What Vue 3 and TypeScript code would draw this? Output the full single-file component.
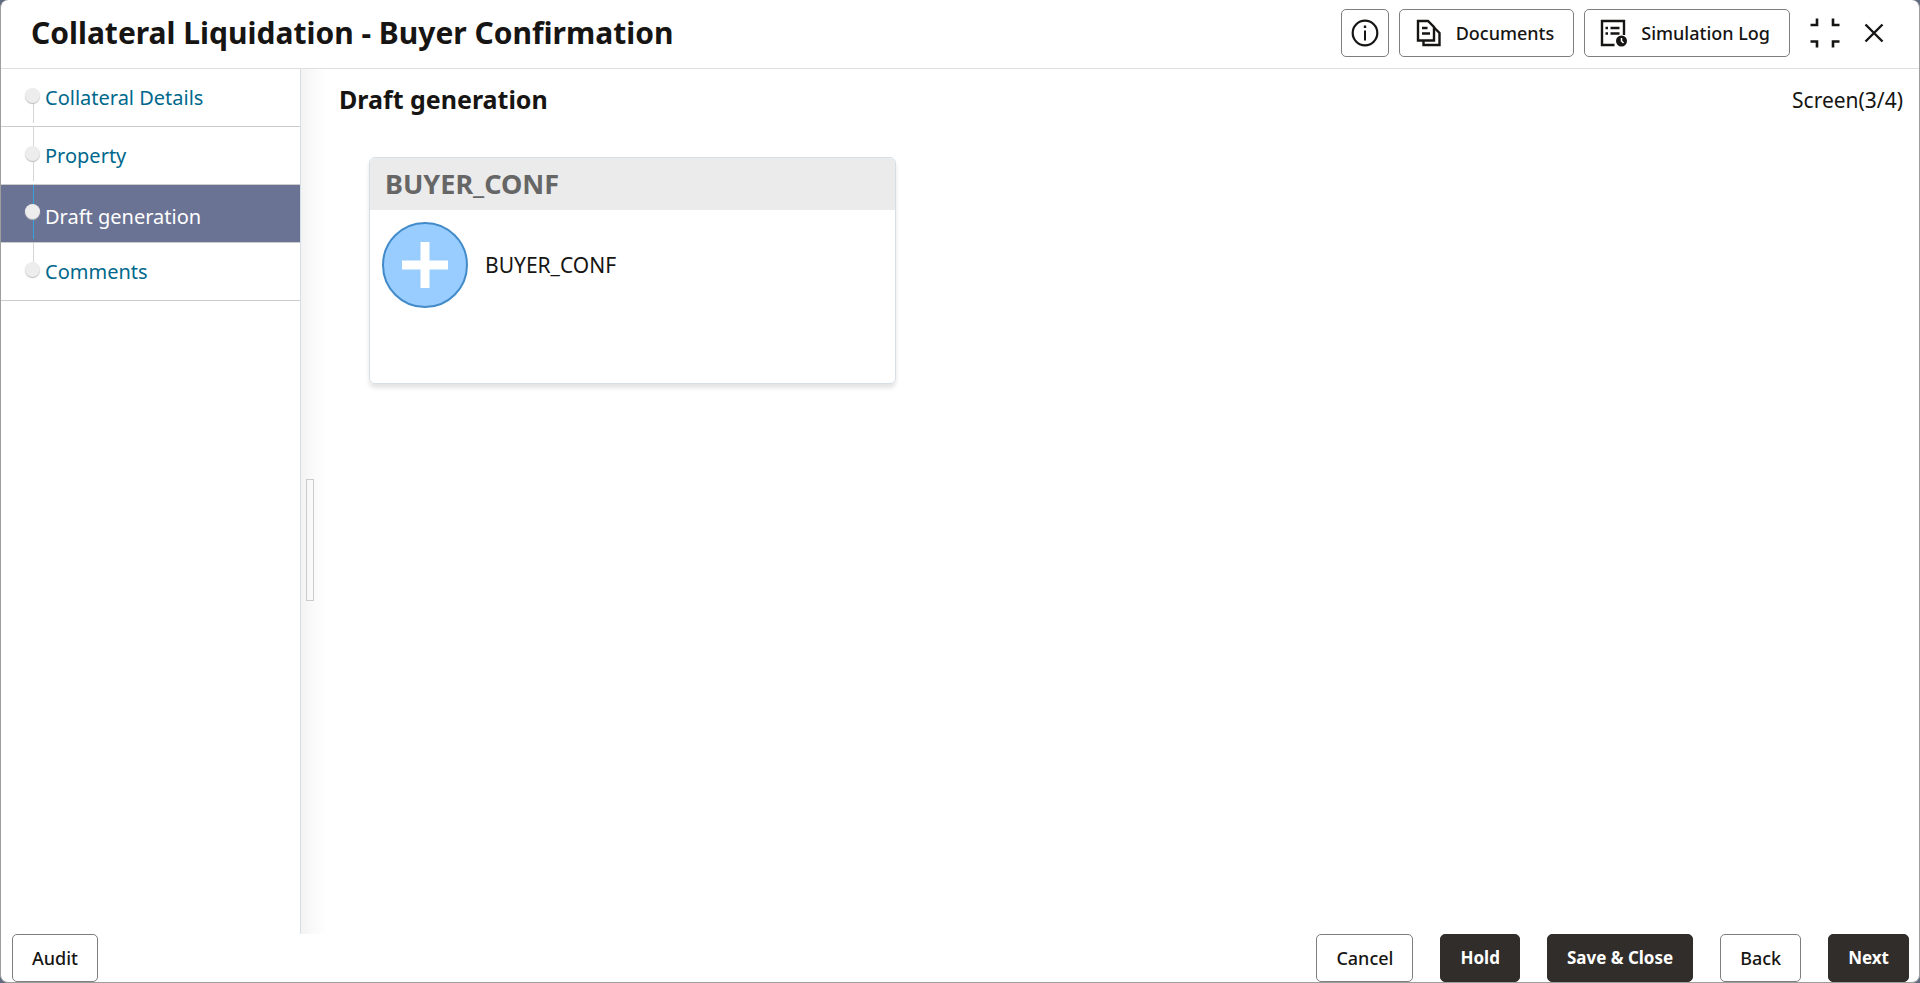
<script setup lang="ts">
import { ref } from 'vue'

interface Step {
  id: string
  label: string
}

interface FooterAction {
  label: string
  primary: boolean
}

const steps: Step[] = [
  { id: 'collateral', label: 'Collateral Details' },
  { id: 'property', label: 'Property' },
  { id: 'draft', label: 'Draft generation' },
  { id: 'comments', label: 'Comments' },
]

const actions: FooterAction[] = [
  { label: 'Cancel', primary: false },
  { label: 'Hold', primary: true },
  { label: 'Save & Close', primary: true },
  { label: 'Back', primary: false },
  { label: 'Next', primary: true },
]

const activeStep = ref('draft')
</script>

<template>
  <div class="window">
    <header class="header">
      <h1 class="title">Collateral Liquidation - Buyer Confirmation</h1>
      <div class="tools">
        <button class="btn square" type="button" aria-label="Information">
          <svg width="28" height="28" viewBox="0 0 28 28" fill="none" stroke="#161513">
            <circle cx="14" cy="14" r="12.3" stroke-width="2.2" />
            <path d="M14 11.5V21.5" stroke-width="2" />
            <path d="M14 6.5V9" stroke-width="2.4" />
          </svg>
        </button>
        <button class="btn tool" type="button">
          <svg width="28" height="28" viewBox="0 0 28 28" fill="none" stroke="#161513" stroke-width="2.4">
            <path d="M4 2H14L20 8V21.500H4Z" />
            <path d="M20 8.500L25.500 14V26H9.500V21.500" />
            <path d="M8 9H13.500M8 14.500H16" />
          </svg>
          <span>Documents</span>
        </button>
        <button class="btn tool" type="button">
          <svg width="28" height="28" viewBox="0 0 28 28" fill="none" stroke="#161513" stroke-width="2.4">
            <path d="M15.500 26H3V2H25V16" />
            <path d="M6.500 9H9M11.500 9H20.500M6.500 14.500H9M11.500 14.500H20.500" />
            <circle cx="22.500" cy="22" r="5.500" fill="#161513" stroke="none" />
            <path d="M22.500 19V22L24.500 24" stroke="#fff" stroke-width="1.500" />
          </svg>
          <span>Simulation Log</span>
        </button>
        <button class="icon-btn" type="button" aria-label="Restore">
          <svg width="30" height="30" viewBox="0 0 30 30" fill="none" stroke="#161513" stroke-width="2.600">
            <path d="M.5 7H7V.5M23 .5V7H29.500M.5 23.500H7V29.500M23 29.500V23.500H29.500" />
          </svg>
        </button>
        <button class="icon-btn" type="button" aria-label="Close">
          <svg width="20" height="20" viewBox="0 0 20 20" fill="none" stroke="#161513" stroke-width="2.400">
            <path d="M1.500 1.500L18.500 18.500M18.500 1.500L1.500 18.500" />
          </svg>
        </button>
      </div>
    </header>

    <div class="body">
      <nav class="steps" aria-label="Steps">
        <a
          v-for="step in steps"
          :key="step.id"
          href="#"
          class="step"
          :class="{ active: step.id === activeStep }"
          @click.prevent="activeStep = step.id"
        >
          <span class="track"><span class="dot"></span></span>
          <span class="step-label">{{ step.label }}</span>
        </a>
      </nav>
      <div class="splitter"><span class="handle"></span></div>
      <main class="main">
        <div class="main-head">
          <h2 class="subtitle">Draft generation</h2>
          <span class="counter">Screen(3/4)</span>
        </div>
        <section class="card">
          <h3 class="card-title">BUYER_CONF</h3>
          <div class="card-body">
            <button class="add" type="button" aria-label="Add BUYER_CONF">
              <svg width="86" height="86" viewBox="0 0 86 86">
                <circle cx="43" cy="43" r="42" fill="#99ccff" stroke="#428bca" stroke-width="2" />
                <path d="M20 43H66M43 20V66" stroke="#fff" stroke-width="9" />
              </svg>
            </button>
            <span class="doc-name">BUYER_CONF</span>
          </div>
        </section>
      </main>
    </div>

    <footer class="footer">
      <button class="btn" type="button">Audit</button>
      <div class="actions">
        <button
          v-for="action in actions"
          :key="action.label"
          class="btn"
          :class="{ primary: action.primary }"
          type="button"
        >
          {{ action.label }}
        </button>
      </div>
    </footer>
  </div>
</template>

<style>
body {
  margin: 0;
  background: #5d6a80;
}
</style>

<style scoped>
.window {
  box-sizing: border-box;
  min-height: 100vh;
  display: flex;
  flex-direction: column;
  border: 1px solid #9e9e9e;
  border-top: 0;
  border-radius: 8px;
  background: #fff;
  color: #161513;
  font-family: "Noto Sans", "Open Sans", sans-serif;
  font-size: 20px;
}

h1,
h2,
h3 {
  margin: 0;
}

svg {
  display: block;
  flex: none;
}

.header {
  display: flex;
  align-items: center;
  justify-content: space-between;
  min-height: 66px;
  padding: 0 35px 2px 30px;
  border-bottom: 1px solid #dfdfdf;
}

.title {
  font-size: 30px;
  line-height: 40px;
  font-weight: 700;
}

.tools {
  display: flex;
  align-items: center;
}

.btn {
  box-sizing: border-box;
  display: flex;
  align-items: center;
  justify-content: center;
  height: 48px;
  padding: 0 19px;
  border: 1px solid #7f7e7d;
  border-radius: 5px;
  background: #fff;
  color: #161513;
  font: 500 18px/24px "Noto Sans", "Open Sans", sans-serif;
  white-space: nowrap;
}

.btn.square {
  width: 48px;
  padding: 0;
}

.btn.tool {
  gap: 14px;
  margin-left: 10px;
  padding: 0 19px 0 14px;
}

.btn.primary {
  border-color: #312d2a;
  background: #312d2a;
  color: #fff;
  font-size: 17px;
  font-weight: 700;
}

.icon-btn {
  margin-left: 20px;
  padding: 0;
  border: 0;
  background: none;
}

.icon-btn + .icon-btn {
  margin-left: 24px;
}

.body {
  flex: 1;
  display: flex;
}

.steps {
  box-sizing: border-box;
  width: 300px;
  flex: none;
  border-right: 1px solid #d6dfe6;
}

.step {
  box-sizing: border-box;
  display: flex;
  height: 58px;
  padding-left: 24px;
  border-bottom: 1px solid #ccc;
  color: #00688c;
  text-decoration: none;
}

.track {
  display: flex;
  justify-content: center;
  width: 15px;
  height: 54px;
  padding-top: 19px;
  box-sizing: border-box;
  background: linear-gradient(#d6d6d6, #d6d6d6) 8px 0 / 1px 100% no-repeat;
}

.step:first-child .track {
  background-size: 1px 34px;
  background-position: 8px 20px;
}

.step:last-child .track {
  background-size: 1px 20px;
}

.dot {
  width: 15px;
  height: 15px;
  border-radius: 50%;
  background: #ededed;
  box-shadow: 0 1px 1px #bbb;
}

.step-label {
  margin-left: 5px;
  line-height: 58px;
}

.step.active {
  background: #6b7394;
  color: #fff;
}

.step.active .track {
  background-image: linear-gradient(#38a0dc, #38a0dc);
}

.step.active .step-label {
  line-height: 64px;
}

.splitter {
  display: flex;
  align-items: center;
  width: 32px;
  flex: none;
  background: linear-gradient(90deg, #f3f3f3, #fafafa 12px, #fff 26px);
}

.handle {
  box-sizing: border-box;
  width: 8px;
  height: 122px;
  margin: 76px 0 0 5px;
  border: 1px solid #ccc;
}

.main {
  flex: 1;
  min-width: 0;
  padding: 11px 16px 0 6px;
}

.main-head {
  display: flex;
  justify-content: space-between;
  line-height: 40px;
}

.subtitle {
  font-size: 25px;
  line-height: 38px;
  font-weight: 700;
}

.counter,
.doc-name {
  font-size: 21px;
}

.card {
  box-sizing: border-box;
  width: 34%;
  max-width: 527px;
  min-height: 227px;
  margin: 37px 0 0 30px;
  overflow: hidden;
  border: 1px solid #d6dfe6;
  border-radius: 6px;
  box-shadow: 0 4px 4px #e4e4e4;
}

.card-title {
  padding: 6px 15px;
  background: #ebebeb;
  color: #666;
  font-size: 27px;
  line-height: 40px;
}

.card-body {
  display: flex;
  align-items: center;
  gap: 17px;
  padding: 12px;
}

.add {
  padding: 0;
  border: 0;
  background: none;
}

.footer {
  display: flex;
  justify-content: space-between;
  padding: 0 10px 0 11px;
}

.actions {
  display: flex;
  gap: 27px;
}
</style>
